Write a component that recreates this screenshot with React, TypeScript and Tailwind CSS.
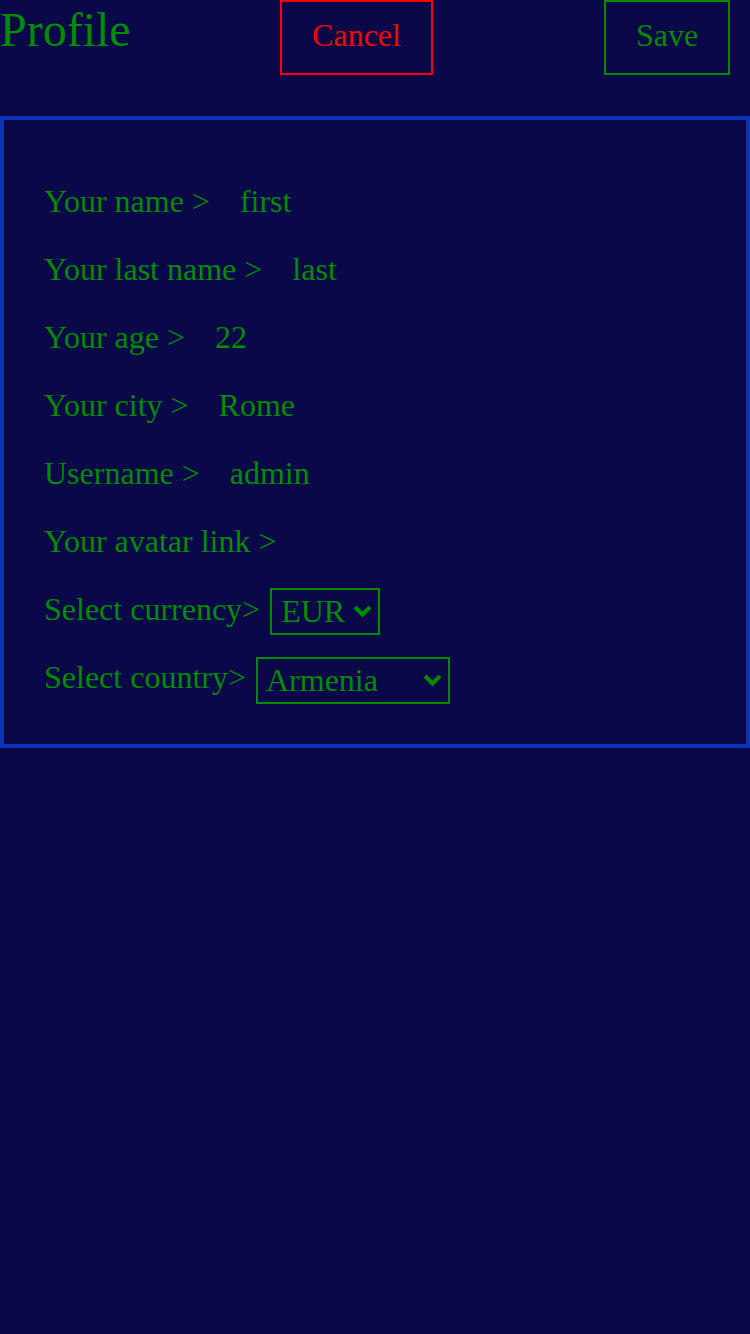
import { useState } from 'react';

const serif = { fontFamily: '"Liberation Serif", "Times New Roman", serif' };

function Chevron() {
  return (
    <svg
      className="pointer-events-none absolute right-[8px] top-1/2 -translate-y-1/2"
      width="19"
      height="13"
      viewBox="0 0 19 13"
      fill="none"
    >
      <path d="M2 2.5 L9.5 10 L17 2.5" stroke="#008c00" strokeWidth="4.2" strokeLinejoin="miter" />
    </svg>
  );
}

function Row({ label, value }: { label: string; value?: string }) {
  return (
    <div className="flex h-[37px] mb-[31px] leading-[37px]">
      <span>{label}</span>
      {value && <span className="ml-[30px]">{value}</span>}
    </div>
  );
}

export default function App() {
  const [currency, setCurrency] = useState('EUR');
  const [country, setCountry] = useState('Armenia');

  return (
    <div className="min-h-screen bg-[#0a0848] text-[#008c00]" style={serif}>
      {/* Header */}
      <div className="flex items-start">
        <h1 className="w-[280px] shrink-0 text-[48px] leading-[60px]">Profile</h1>
        <button className="h-[75px] w-[153px] shrink-0 border-2 border-[#ff0000] pt-[15px] pb-[19px] text-center text-[32px] leading-[37px] text-[#ff0000]">
          Cancel
        </button>
        <button className="ml-auto mr-[20px] h-[75px] w-[126px] shrink-0 border-2 border-[#008c00] pt-[15px] pb-[19px] text-center text-[32px] leading-[37px]">
          Save
        </button>
      </div>

      {/* Form */}
      <div className="mt-[41px] border-4 border-[#0c34b4] pt-[63px] pb-[40px] pl-[40px] text-[32px]">
        <Row label="Your name >" value="first" />
        <Row label="Your last name >" value="last" />
        <Row label="Your age >" value="22" />
        <Row label="Your city >" value="Rome" />
        <Row label="Username >" value="admin" />
        <Row label="Your avatar link >" />

        <div className="mt-[-4px] flex items-start gap-[10px]">
          <span className="mt-[4px] leading-[37px]">Select currency&gt;</span>
          <div className="relative">
            <select
              value={currency}
              onChange={(e) => setCurrency(e.target.value)}
              className="h-[47px] w-[110px] appearance-none border-2 border-[#008c00] bg-transparent pl-[9px] leading-[37px] outline-none"
            >
              <option>EUR</option>
              <option>USD</option>
              <option>RUB</option>
            </select>
            <Chevron />
          </div>
        </div>

        <div className="mt-[21px] flex items-start gap-[10px]">
          <span className="mt-[3px] leading-[37px]">Select country&gt;</span>
          <div className="relative">
            <select
              value={country}
              onChange={(e) => setCountry(e.target.value)}
              className="h-[47px] w-[194px] appearance-none border-2 border-[#008c00] bg-transparent pl-[8px] leading-[37px] outline-none"
            >
              <option>Armenia</option>
              <option>Italy</option>
              <option>Russia</option>
            </select>
            <Chevron />
          </div>
        </div>
      </div>
    </div>
  );
}
